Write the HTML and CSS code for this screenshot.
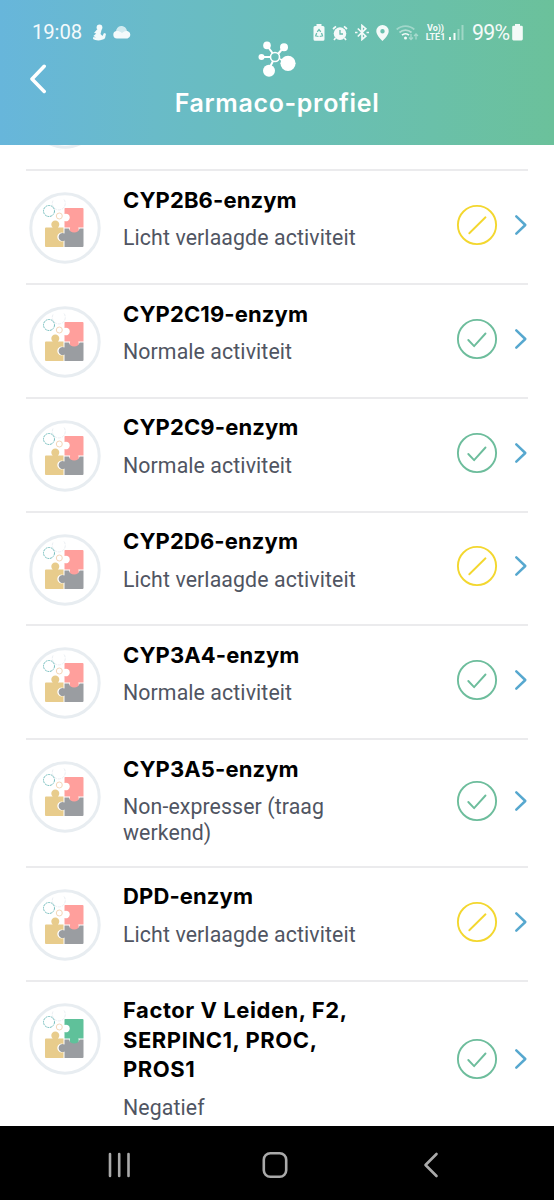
FILE: index.html
```html
<!DOCTYPE html>
<html lang="nl">
<head>
<meta charset="utf-8">
<title>Farmaco-profiel</title>
<link rel="stylesheet" href="styles.css">
</head>
<body>
<svg class="defs" aria-hidden="true">
  <symbol id="puzzle" viewBox="0 0 72 72">
    <circle cx="36" cy="36" r="34.2" fill="#fff" stroke="#e8edf1" stroke-width="3"/>
    <path d="M24 8.5a6.500 6.500 0 1 0 11-1" fill="none" stroke="#eceff3" stroke-dasharray="3 1"/>
    <circle cx="20" cy="19" r="5.500" fill="none" stroke="#74bdbd" stroke-width="1" stroke-dasharray="2 .7"/>
    <circle cx="30.300" cy="24" r="3" fill="none" stroke="#f4d6b8" stroke-width="1"/>
    <path d="M17 35.500h6.700a4 4 0 1 1 5.200 0h5.600V41a4.400 4.400 0 1 0 0 8v6H17a1 1 0 0 1-1-1V36.500a1 1 0 0 1 1-1z" fill="#e8cc8c"/>
    <path class="accent" d="M36 16h17.500a1 1 0 0 1 1 1v18.500h-5.300a4.600 4.600 0 1 1-8 0H35.500V29a3.800 3.800 0 1 0 0-7v-5.500z"/>
    <path d="M35.500 36.500h4.300a5.600 5.600 0 0 0 10.800 0h3.900V54a1 1 0 0 1-1 1h-18v-6.500a4 4 0 1 1 0-7z" fill="#9a9da1"/>
  </symbol>
  <symbol id="slash" viewBox="0 0 42 42">
    <circle cx="21" cy="21" r="19.100"/><path d="M13.300 29.300 29.500 13.300"/>
  </symbol>
  <symbol id="check" viewBox="0 0 42 42">
    <circle cx="21" cy="21" r="19.100"/><path d="m12.300 22 5.800 6.200 11.400-12.700"/>
  </symbol>
  <symbol id="chevron" viewBox="0 0 14 22"><path d="m2.300 2.300 9 8.700-9 8.700"/></symbol>
</svg>
<header class="header">
  <div class="status">
    <span class="clock">19:08</span>
    <svg class="person" width="14" height="17" viewBox="0 0 14 17"><circle cx="7.500" cy="3.400" r="2.900"/><path d="M5 5.500 9.500 6l-1 4 2 2 1.500-3 2 .7-1 4.600C10 17 3.500 17 1 15l.3-2 2.700.5L1.300 12l3-2.500L2 9z"/></svg>
    <svg class="cloud" width="18" height="13" viewBox="0 0 18 13"><path opacity=".75" d="M3 6a5.500 5.500 0 0 1 11-1l1 4H3z"/><path d="M4 12.500a3.700 3.700 0 0 1 0-7.400c2 0 3 .5 5 2 2-2 4-2.500 6-1.800a3.800 3.800 0 0 1-.5 7.200z"/></svg>
    <div class="status-icons">
      <svg width="12" height="17" viewBox="0 0 12 17"><path d="M3.500 0h5v2H10a1.500 1.500 0 0 1 1.500 1.500v11.700a1.500 1.500 0 0 1-1.500 1.500H2a1.500 1.500 0 0 1-1.500-1.500V3.500A1.500 1.500 0 0 1 2 2h1.500z"/><path class="cut" d="m4.200 7.800 1.800-2.300 1.800 2.300M8.500 9l1 2.700-2.800.8M5.500 12.500l-2.800-.8 1-2.700"/></svg>
      <svg class="alarm" width="16" height="16" viewBox="0 0 16 16"><circle cx="8" cy="8.600" r="6.300"/><path class="line" d="M1 4 4 1.300M12 1.300 15 4M3.500 13 2 15M12.500 13l1.500 2"/><path class="cut" d="M8 5v4h3"/></svg>
      <svg class="bt" width="14" height="17" viewBox="0 0 14 17"><path class="line" d="m2.800 4.500 8 7.700L7 15.500v-14l3.800 3.200-8 7.800M0 8.500h2.500M11.500 8.500H14"/></svg>
      <svg class="pin" width="13" height="16" viewBox="0 0 13 16"><path fill-rule="evenodd" d="M6.500 0a6.200 6.200 0 0 1 6.200 6.200C12.700 10.500 6.500 16 6.500 16S.3 10.500.3 6.200A6.200 6.200 0 0 1 6.500 0zm0 4a2.200 2.200 0 1 0 0 4.400 2.200 2.200 0 0 0 0-4.400z"/></svg>
      <svg class="wifi" width="23" height="17" viewBox="0 0 23 17"><g class="line"><path opacity=".4" d="M.7 5.500a13 13 0 0 1 17.600 0"/><path opacity=".55" d="M3.500 8.500a9 9 0 0 1 12 0"/><path d="M6 11.200a5 5 0 0 1 7 0"/></g><circle cx="9.500" cy="14" r="1.500"/><path class="arrows" opacity=".45" d="M15 10v5.500m-2-2 2 2 2-2M20 15.500V10m-2 2 2-2 2 2"/></svg>
      <span class="volte"><span>Vo))</span><span>LTE1</span></span>
      <svg class="signal" width="15" height="15" viewBox="0 0 15 15"><path d="M0 12h2v3H0zM4.500 8h2v7h-2z"/><path opacity=".4" d="M8.500 4h2v11h-2zM12.500 0h2v15h-2z"/></svg>
      <span class="percent">99%</span>
      <svg class="battery" width="11" height="17" viewBox="0 0 11 17"><path d="M3 0h5v1.800h1.500a1.300 1.300 0 0 1 1.300 1.300v12a1.300 1.300 0 0 1-1.300 1.300h-8A1.300 1.300 0 0 1 .2 15.100v-12a1.300 1.300 0 0 1 1.300-1.300H3z"/></svg>
    </div>
  </div>
  <div class="navbar">
    <svg class="back" width="18" height="30" viewBox="0 0 18 30"><path d="M15.200 2.300 3 15l12.200 12.400"/></svg>
    <div class="heading">
      <svg class="molecule" width="38" height="37" viewBox="0 0 38 37"><path class="bonds" d="M17 15.500 9 4.500M20 13 26 6M13 16H3M22 18l7 4M15 20l-4 8"/><circle class="ring" cx="17" cy="16" r="4.500"/><circle cx="9" cy="4.400" r="3.800"/><circle cx="26" cy="6.200" r="4"/><circle cx="3.500" cy="16" r="3"/><circle cx="30" cy="22.300" r="7.600"/><circle cx="11" cy="29.800" r="6"/></svg>
      <h1>Farmaco-profiel</h1>
    </div>
  </div>
</header>
<main class="list">
  <div class="peek"><svg class="thumb"><use href="#puzzle"/></svg></div>
  <article class="row"><svg class="thumb"><use href="#puzzle"/></svg><div class="text"><h2>CYP2B6-enzym</h2><p>Licht verlaagde activiteit</p></div><svg class="state warn"><use href="#slash"/></svg><svg class="go"><use href="#chevron"/></svg></article>
  <article class="row"><svg class="thumb"><use href="#puzzle"/></svg><div class="text"><h2>CYP2C19-enzym</h2><p>Normale activiteit</p></div><svg class="state"><use href="#check"/></svg><svg class="go"><use href="#chevron"/></svg></article>
  <article class="row"><svg class="thumb"><use href="#puzzle"/></svg><div class="text"><h2>CYP2C9-enzym</h2><p>Normale activiteit</p></div><svg class="state"><use href="#check"/></svg><svg class="go"><use href="#chevron"/></svg></article>
  <article class="row"><svg class="thumb"><use href="#puzzle"/></svg><div class="text"><h2>CYP2D6-enzym</h2><p>Licht verlaagde activiteit</p></div><svg class="state warn"><use href="#slash"/></svg><svg class="go"><use href="#chevron"/></svg></article>
  <article class="row"><svg class="thumb"><use href="#puzzle"/></svg><div class="text"><h2>CYP3A4-enzym</h2><p>Normale activiteit</p></div><svg class="state"><use href="#check"/></svg><svg class="go"><use href="#chevron"/></svg></article>
  <article class="row"><svg class="thumb"><use href="#puzzle"/></svg><div class="text"><h2>CYP3A5-enzym</h2><p>Non-expresser (traag werkend)</p></div><svg class="state"><use href="#check"/></svg><svg class="go"><use href="#chevron"/></svg></article>
  <article class="row"><svg class="thumb"><use href="#puzzle"/></svg><div class="text"><h2>DPD-enzym</h2><p>Licht verlaagde activiteit</p></div><svg class="state warn"><use href="#slash"/></svg><svg class="go"><use href="#chevron"/></svg></article>
  <article class="row"><svg class="thumb green"><use href="#puzzle"/></svg><div class="text"><h2 class="long">Factor V Leiden, F2, SERPINC1, PROC, PROS1</h2><p>Negatief</p></div><svg class="state"><use href="#check"/></svg><svg class="go"><use href="#chevron"/></svg></article>
</main>
<nav class="system">
  <svg width="24" height="26" viewBox="0 0 24 26"><path d="M2 2v22M11.200 2v22M20.500 2v22"/></svg>
  <svg width="26" height="28" viewBox="0 0 26 28"><rect x="1.800" y="2.200" width="22.400" height="23.600" rx="6.500"/></svg>
  <svg width="16" height="26" viewBox="0 0 16 26"><path d="M13.500 2 2.500 13l11 11"/></svg>
</nav>
</body>
</html>
```
FILE: styles.css
```css
* { box-sizing: border-box; }
body { margin: 0; width: 554px; height: 1200px; display: flex; flex-direction: column; overflow: hidden; background: #fff; font-family: Roboto, sans-serif; }
h1, h2, p { margin: 0; }
svg { display: block; flex: none; }
.defs { position: absolute; width: 0; height: 0; }

.header { flex: none; height: 145px; color: #fff; background: linear-gradient(90deg, #67b6db 0%, #69bbc8 28%, #69beb8 52%, #6ac0a9 78%, #6bc19b 100%); }
.header svg { fill: #fff; }
.status { display: flex; align-items: center; height: 41px; padding: 24px 31px 0 32px; opacity: .93; }
.clock { width: 51px; font-size: 20.300px; line-height: 17px; letter-spacing: -.1px; white-space: nowrap; }
.person { margin-left: 9px; }
.cloud { margin-left: 7px; }
.status-icons { display: flex; align-items: center; margin-left: auto; }
.header .line { fill: none; stroke: #fff; stroke-width: 1.700; }
.header .cut { fill: none; stroke: #69bfb0; stroke-width: 1.300; }
.alarm, .pin { margin-left: 7px; }
.bt, .wifi { margin-left: 7px; }
.header .arrows { fill: none; stroke: #fff; stroke-width: 1.300; }
.volte { display: flex; flex-direction: column; align-items: center; width: 21px; margin-left: 6px; font-size: 9px; line-height: 8.500px; font-weight: 700; }
.signal { margin-left: 3px; }
.percent { width: 38px; margin-left: 8px; font-size: 21.300px; line-height: 17px; letter-spacing: -.7px; }
.battery { margin-left: 2px; }
.navbar { display: grid; grid-template-columns: 60px 1fr 60px; }
.back { margin: 23px 0 0 29px; }
.back path { fill: none; stroke: #fff; stroke-width: 3.500; stroke-linecap: round; stroke-linejoin: round; }
.heading { display: flex; flex-direction: column; align-items: center; }
.header .bonds { stroke: #fff; stroke-width: 2; }
.header .ring { fill: #69beb8; stroke: #fff; stroke-width: 1.600; }
h1 { margin-top: 9px; font: 600 25px/32px Inter, sans-serif; letter-spacing: .65px; white-space: nowrap; }

.list { flex: 1; min-height: 0; overflow: hidden; padding: 0 26px; }
.peek { height: 24px; padding-left: 3px; overflow: hidden; }
.peek .thumb { margin-top: -68px; }
.row { display: flex; align-items: center; border-top: 2px solid #ebebed; padding-left: 3px; }
.thumb { width: 72px; height: 72px; color: #ff9f9c; }
.row .thumb { align-self: flex-start; margin: 21px 0 18.850px; }
.thumb.green { color: #5fc19a; }
.accent { fill: currentColor; }
.text { align-self: flex-start; width: 250px; margin-left: 22px; padding: 14.700px 0 20.400px; }
h2 { font: 700 22px/29.600px Inter, sans-serif; letter-spacing: .12px; color: #000; }
h2.long { letter-spacing: .55px; }
p { margin-top: 9.800px; font-size: 21.300px; line-height: 25.500px; letter-spacing: .1px; color: #505562; }
.state { width: 42px; height: 42px; margin: 0 0 4px 84px; fill: none; stroke: #6dbd9c; stroke-width: 1.900; stroke-linecap: round; stroke-linejoin: round; }
.state.warn { stroke: #f3d72f; }
.go { width: 14px; height: 22px; margin: 0 0 4px 16.500px; fill: none; stroke: #57a8cf; stroke-width: 2.500; stroke-linecap: round; stroke-linejoin: round; }

.system { flex: none; display: flex; gap: 143px; align-items: center; height: 74px; padding: 3px 0 0 107.500px; background: #000; }
.system svg { fill: none; stroke: #aaa; stroke-width: 2.600; stroke-linecap: round; stroke-linejoin: round; }
.system svg:nth-child(2) { margin-left: -13px; }
.system svg:nth-child(3) { margin-left: -8px; }
```
